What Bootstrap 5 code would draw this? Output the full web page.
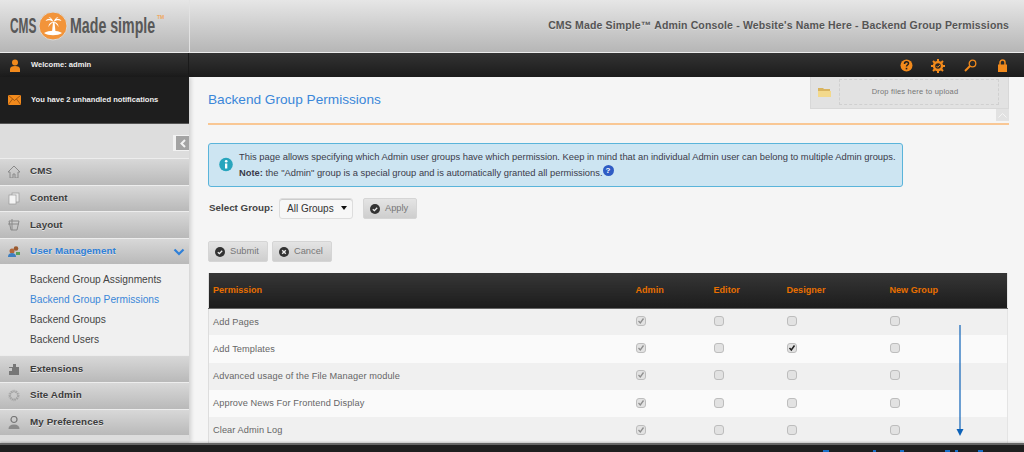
<!DOCTYPE html>
<html lang="en">
<head>
  <meta charset="UTF-8">
  <title>Backend Group Permissions</title>
  <link href="https://cdn.jsdelivr.net/npm/bootstrap@5.3.2/dist/css/bootstrap.min.css" rel="stylesheet">
  <style>
    html, body { height: 100%; }
    body { font-family: Arial, "Liberation Sans", sans-serif; font-size: 10px; background: #f5f5f5; color: #444; overflow: hidden; }
    .page-wrap { height: 452px; overflow: hidden; }
    .top-head { height: 53px; background: linear-gradient(#e6e6e6, #b6b6b6); border-bottom: 1px solid #eee; }
    .logo-box { width: 190px; border-right: 1px solid #e2e2e2; padding-left: 10px; gap: 2px; }
    .logo-word { display: inline-block; font-weight: 700; font-size: 22px; color: #585858; line-height: 1; white-space: nowrap; transform-origin: left center; flex: none; }
    .logo-cms { width: 26px; transform: scaleX(.54); }
    .logo-made { width: 85px; transform: scaleX(.645); }
    .logo-tm { font-size: 5px; line-height: 6px; color: #f0a860; align-self: flex-start; margin-top: 14px; font-weight: 700; }
    .head-title { font-size: 10.5px; font-weight: 700; color: #555; letter-spacing: .15px; padding-right: 15px; text-shadow: 0 1px 0 #ddd; }
    .dark-bar { height: 24px; background: linear-gradient(#333, #1c1c1c); color: #eee; }
    .welcome-box { width: 189px; border-right: 1px solid #1a1a1a; padding-left: 9px; gap: 10px; font-size: 7.6px; font-weight: 700; }
    .tool-icons { padding-right: 6px; }
    .tool-slot { width: 32px; text-align: center; }
    .body-row { height: 366px; }
    .side-col { width: 189px; background: #ddd; box-shadow: 2px 0 4px rgba(0,0,0,.15); z-index: 2; position: relative; }
    .notify-box { height: 47px; background: #1e1e1e; color: #eee; padding-left: 8px; gap: 10px; font-size: 7.6px; font-weight: 700; border-bottom: 1px solid #555; }
    .collapse-row { height: 34px; padding-top: 11px; }
    .collapse-tab { width: 16px; height: 16px; background: #f2f2f2; display: flex; align-items: center; justify-content: flex-end; }
    .collapse-tab span { width: 13px; height: 14px; background: #a3a3a3; display: flex; align-items: center; justify-content: center; }
    .nav-head { height: 26.6px; background: linear-gradient(#d8d8d8, #b9b9b9); border-top: 1px solid #ededed; padding-left: 8px; font-size: 9.8px; font-weight: 700; color: #3c3c3c; letter-spacing: .1px; text-shadow: 0 1px 0 #e5e5e5; }
    .nav-head svg { width: 12px; height: 13px; margin-right: 10px; flex: none; }
    .nav-on { color: #2f80d8; }
    .sub-menu { background: #f0f0f0; height: 91px; padding: 6px 0 0 30px; }
    .sub-menu div { height: 20px; line-height: 20px; font-size: 10.2px; color: #444; }
    .sub-menu .sub-on { color: #3a87d8; }
    .main-col { position: relative; padding: 0 15px 0 19px; min-width: 0; }
    .page-title { height: 48px; margin: 0; padding-top: 14px; font-size: 13.65px; line-height: 17px; font-weight: 400; color: #3b87d9; border-bottom: 2px solid #f9c794; }
    .drop-panel { position: absolute; top: 0; right: 15px; width: 199px; height: 32px; background: #e2e2e2; border: 1px solid #d8d8d8; border-top: 0; z-index: 1; padding: 2px 9px 3px 7px; gap: 8px; }
    .drop-zone { border: 1px dashed #d0d0d0; font-size: 7.5px; color: #777; letter-spacing: .2px; padding-right: 8px; }
    .drop-tab { position: absolute; top: 32px; right: 15px; width: 13px; height: 12px; background: #e2e2e2; display: flex; align-items: center; justify-content: center; }
    .note-box { margin-top: 18px; height: 44px; width: 695px; background: #cde5f2; border: 1px solid #5ab4da; border-radius: 3px; padding-left: 9px; gap: 5px; font-size: 9.37px; line-height: 15px; color: #3b3b4a; white-space: nowrap; }
    .help-dot { display: inline-block; width: 11px; height: 11px; border-radius: 50%; background: #2f5cc4; color: #fff; font-size: 8px; line-height: 11px; font-weight: 700; text-align: center; vertical-align: 3px; }
    .group-row { margin-top: 9px; height: 24px; gap: 10px; }
    .group-label { font-size: 9.8px; font-weight: 700; color: #444; width: 61px; margin-right: -1px; margin-left: 1px; white-space: nowrap; }
    .group-pick { width: 74px; height: 21px; border: 1px solid #ddd; border-radius: 3px; background: #f7f7f7; padding-left: 7px; padding-right: 5px; font-size: 10px; color: #333; box-shadow: inset 0 1px 0 #ccc; }
    .pick-arrow { width: 0; height: 0; border: 3px solid transparent; border-top: 4px solid #111; border-bottom: 0; }
    .act-btn { height: 21px; background: linear-gradient(#e4e4e4, #cecece); border: 1px solid #d5d5d5; border-radius: 2px; font-size: 9.3px; color: #777; padding: 0 8px 0 6px; gap: 5px; }
    .act-btn svg { width: 10px; height: 10px; }
    .group-row .act-btn { margin-top: 1px; }
    .btn-row { margin-top: 21px; gap: 4px; }
    .perm-table { margin-top: 11px; width: 800px; border-right: 1px solid #e4e4e4; border-left: 1px solid #ddd; table-layout: fixed; border-collapse: collapse; }
    .perm-table th { height: 35px; padding: 2px 0 0 4px; background: linear-gradient(#363636, #1c1c1c); border-bottom: 1px solid #666; color: #e86f00; font-size: 9.1px; font-weight: 700; white-space: nowrap; }
    .perm-table td { height: 27.3px; padding: 0 0 0 4px; color: #666; font-size: 9.2px; letter-spacing: .1px; }
    .perm-table td.perm-name { padding-top: 1px; }
    .perm-table tr.alt-a td { background: #f0f0f0; }
    .perm-table tr.alt-b td { background: #fafafa; }
    .tick-box { display: block; width: 10px; height: 10px; margin-top: -2px; border-radius: 3px; background: #e2e2e2; border: 1px solid #bdbdbd; }
    .tick-box svg { display: block; width: 8px; height: 8px; }
    .down-arrow { position: absolute; left: 765px; top: 248px; width: 12px; height: 112px; z-index: 1; }
    .foot-bar { height: 9px; background: #1f1f1f; border-top: 2px solid #666; box-shadow: 0 -1px 2px rgba(0,0,0,.2); position: relative; z-index: 3; overflow: hidden; }
    .foot-mark { position: absolute; bottom: 0; height: 2px; background: #1c70c8; }
  </style>
</head>
<body>
<div class="page-wrap d-flex flex-column">
  <div class="top-head d-flex">
    <div class="logo-box d-flex align-items-center">
      <span class="logo-word logo-cms">CMS</span>
      <svg width="30" height="30" viewBox="0 0 30 30" class="flex-shrink-0" aria-hidden="true">
        <circle cx="15" cy="15" r="14" fill="#f2943a" stroke="#d9d9d9"/>
        <path d="M6 22c5-3 13-3 18 0-4 3-14 3-18 0z" fill="#fff"/>
        <path d="M14 21l1-10h1.500l1 10z" fill="#fff"/>
        <path d="M15.500 11c-2-4-6-4-8-1 3-1 5-1 8 1zM15.500 11c2-4 6-4 8-1-3-1-5-1-8 1zM15.500 11c-1-3-3-5-5-5 2 1 3 3 5 5zM15.500 11c1-3 3-5 5-5-2 1-3 3-5 5zM15.500 11c-3 0-5 2-5 5 1-2 3-4 5-5zM15.500 11c3 0 5 2 5 5-1-2-3-4-5-5z" fill="#fff"/>
      </svg>
      <span class="logo-word logo-made">Made simple</span>
      <span class="logo-tm">TM</span>
    </div>
    <div class="flex-grow-1 d-flex align-items-center justify-content-end head-title">CMS Made Simple™ Admin Console - Website's Name Here - Backend Group Permissions</div>
  </div>

  <div class="dark-bar d-flex">
    <div class="welcome-box d-flex align-items-center">
      <svg width="12" height="13" viewBox="0 0 12 13" aria-hidden="true"><circle cx="6" cy="3.500" r="3" fill="#f28a1c"/><path d="M1 13v-3c0-2 2-3 5-3s5 1 5 3v3z" fill="#f28a1c"/></svg>
      <span>Welcome: admin</span>
    </div>
    <div class="flex-grow-1 d-flex align-items-center justify-content-end tool-icons">
      <span class="tool-slot"><svg width="13" height="13" viewBox="0 0 13 13" aria-hidden="true"><circle cx="6.500" cy="6.500" r="6" fill="#f28a1c"/><path d="M4.500 5c0-3 4-3 4-.5 0 1.500-2 1.500-2 3" fill="none" stroke="#1f1f1f" stroke-width="1.500"/><rect x="5.700" y="8.800" width="1.600" height="1.600" fill="#1f1f1f"/></svg></span>
      <span class="tool-slot"><svg width="14" height="14" viewBox="0 0 14 14" aria-hidden="true"><circle cx="7" cy="7" r="4" fill="none" stroke="#f28a1c" stroke-width="2.400"/><path d="M7 0v3M7 11v3M0 7h3M11 7h3M2 2l2 2M10 10l2 2M12 2l-2 2M4 10l-2 2" stroke="#f28a1c" stroke-width="2"/><path d="M5.500 7l1.200 1.200L9 6" fill="none" stroke="#f28a1c"/></svg></span>
      <span class="tool-slot"><svg width="13" height="13" viewBox="0 0 13 13" aria-hidden="true"><circle cx="8.500" cy="4.500" r="3.300" fill="none" stroke="#f28a1c" stroke-width="1.300"/><path d="M6 7l-5 5" stroke="#f28a1c" stroke-width="2"/></svg></span>
      <span class="tool-slot"><svg width="11" height="13" viewBox="0 0 11 13" aria-hidden="true"><path d="M3 6V3.500a2.500 2.500 0 015 0V6" fill="none" stroke="#f28a1c" stroke-width="1.500"/><rect x="1" y="5.500" width="9" height="7.500" fill="#f28a1c"/></svg></span>
    </div>
  </div>

  <div class="body-row d-flex">
    <div class="side-col flex-shrink-0">
      <div class="notify-box d-flex align-items-center">
        <svg width="13" height="10" viewBox="0 0 13 10" aria-hidden="true"><rect width="13" height="10" fill="#f28a1c"/><path d="M0 0l6.500 5.500L13 0M0 10l4.500-6M13 10L8.500 4" fill="none" stroke="#8a4a10" stroke-width=".8"/></svg>
        <span>You have 2 unhandled notifications</span>
      </div>
      <div class="collapse-row d-flex justify-content-end">
        <div class="collapse-tab"><span><svg width="6" height="9" viewBox="0 0 6 9" aria-hidden="true"><path d="M5 1L1.500 4.500 5 8" fill="none" stroke="#f2f2f2" stroke-width="2"/></svg></span></div>
      </div>
      <div class="nav-head d-flex align-items-center"><svg viewBox="0 0 12 13" aria-hidden="true"><path d="M6 1L0 7h2v6h3V9h2v4h3V7h2z" fill="none" stroke="#8a8a8a"/></svg>CMS</div>
      <div class="nav-head d-flex align-items-center"><svg viewBox="0 0 12 13" aria-hidden="true"><rect x="4" y="1" width="7" height="9" fill="#e8e8e8" stroke="#999" stroke-width=".7"/><rect x="1" y="3" width="7" height="9" fill="#f4f4f4" stroke="#999" stroke-width=".7"/></svg>Content</div>
      <div class="nav-head d-flex align-items-center"><svg viewBox="0 0 12 13" aria-hidden="true"><path d="M1 3h10l-2 9H3zM4 1v11M0 6h11" fill="none" stroke="#8a8a8a"/></svg>Layout</div>
      <div class="nav-head nav-on d-flex align-items-center"><svg viewBox="0 0 12 13" aria-hidden="true"><circle cx="4" cy="6" r="2.500" fill="#b5683a"/><circle cx="8" cy="3.500" r="2.300" fill="#9a5a30"/><path d="M0 12c0-3 2-4 4-4s4 1 4 4z" fill="#3f7fc0"/><path d="M8 7h4v3H8z" fill="#5aa05a"/></svg>User Management<svg class="ms-auto me-1" viewBox="0 0 12 13" aria-hidden="true"><path d="M1.500 4.500L6 9l4.500-4.500" fill="none" stroke="#2f80d8" stroke-width="2.200"/></svg></div>
      <div class="sub-menu">
        <div>Backend Group Assignments</div>
        <div class="sub-on">Backend Group Permissions</div>
        <div>Backend Groups</div>
        <div>Backend Users</div>
      </div>
      <div class="nav-head d-flex align-items-center"><svg viewBox="0 0 12 13" aria-hidden="true"><path d="M5 1h3v3h3v8H1V8h3V5H1V4h4z" fill="#777"/></svg>Extensions</div>
      <div class="nav-head d-flex align-items-center"><svg viewBox="0 0 12 13" aria-hidden="true"><circle cx="6" cy="6.500" r="4" fill="none" stroke="#a0a0a0" stroke-width="2" stroke-dasharray="1.500 .7"/><circle cx="6" cy="6.500" r="5.300" fill="none" stroke="#a8a8a8" stroke-width=".8" stroke-dasharray="1 1"/></svg>Site Admin</div>
      <div class="nav-head d-flex align-items-center"><svg viewBox="0 0 12 13" aria-hidden="true"><circle cx="6" cy="3.500" r="3" fill="none" stroke="#777" stroke-width="1.200"/><path d="M.5 13c0-3 2-4.500 5.500-4.500s5.500 1.500 5.500 4.500z" fill="#8a8a8a"/></svg>My Preferences</div>
    </div>

    <div class="main-col flex-grow-1">
      <h1 class="page-title">Backend Group Permissions</h1>
      <div class="drop-panel d-flex align-items-center">
        <svg width="13" height="10" viewBox="0 0 13 10" class="flex-shrink-0" aria-hidden="true"><path d="M0 1h5l1 1h6v8H0z" fill="#d9b45f"/><path d="M0 4h13v6H0z" fill="#f3d98c"/></svg>
        <div class="drop-zone flex-grow-1 h-100 d-flex align-items-center justify-content-center">Drop files here to upload</div>
      </div>
      <div class="drop-tab"><svg width="9" height="5" viewBox="0 0 9 5" aria-hidden="true"><path d="M.5 4.500l4-4 4 4" fill="none" stroke="#f5f5f5"/></svg></div>

      <div class="note-box d-flex align-items-center">
        <svg width="16" height="16" viewBox="0 0 16 16" class="flex-shrink-0" aria-hidden="true"><circle cx="8" cy="7.500" r="6.800" fill="#28a5bd"/><rect x="7" y="6.500" width="2.300" height="5" fill="#fff"/><circle cx="8.200" cy="4.300" r="1.300" fill="#fff"/></svg>
        <div>This page allows specifying which Admin user groups have which permission. Keep in mind that an individual Admin user can belong to multiple Admin groups.<br><b>Note:</b> the "Admin" group is a special group and is automatically granted all permissions.<span class="help-dot">?</span></div>
      </div>

      <div class="group-row d-flex align-items-center">
        <span class="group-label">Select Group:</span>
        <div class="group-pick d-flex align-items-center justify-content-between"><span>All Groups</span><span class="pick-arrow"></span></div>
        <div class="act-btn d-flex align-items-center"><svg viewBox="0 0 10 10" aria-hidden="true"><circle cx="5" cy="5" r="5" fill="#333"/><path d="M2.800 5.200l1.600 1.500 2.800-3" fill="none" stroke="#eee" stroke-width="1.300"/></svg>Apply</div>
      </div>

      <div class="btn-row d-flex">
        <div class="act-btn d-flex align-items-center"><svg viewBox="0 0 10 10" aria-hidden="true"><circle cx="5" cy="5" r="5" fill="#333"/><path d="M2.800 5.200l1.600 1.500 2.800-3" fill="none" stroke="#eee" stroke-width="1.300"/></svg>Submit</div>
        <div class="act-btn d-flex align-items-center"><svg viewBox="0 0 10 10" aria-hidden="true"><circle cx="5" cy="5" r="5" fill="#333"/><path d="M3.200 3.200l3.600 3.600M6.800 3.200l-3.600 3.600" stroke="#eee" stroke-width="1.400"/></svg>Cancel</div>
      </div>

      <table class="perm-table" id="permTable">
        <colgroup><col style="width:423px"><col style="width:78px"><col style="width:73px"><col style="width:103px"><col></colgroup>
        <thead><tr><th>Permission</th><th>Admin</th><th>Editor</th><th>Designer</th><th>New Group</th></tr></thead>
        <tbody></tbody>
      </table>
      <svg class="down-arrow" viewBox="0 0 12 112" aria-hidden="true"><path d="M6 0v106" stroke="#0d62b8" stroke-width="1.200"/><path d="M2.500 104h7L6 111z" fill="#0d62b8"/></svg>
    </div>
  </div>

  <div class="foot-bar" id="footBar"></div>
</div>
<script>
  // permission rows: name, then which group boxes are ticked
  const rows = [
    ['Add Pages', false],
    ['Add Templates', true],
    ['Advanced usage of the File Manager module', false],
    ['Approve News For Frontend Display', false],
    ['Clear Admin Log', false]
  ];
  const grey = '<svg viewBox="0 0 8 8"><path d="M1.500 4l1.800 2L6.500 1.500" fill="none" stroke="#8f8f8f" stroke-width="1.300"/></svg>';
  const dark = '<svg viewBox="0 0 8 8"><path d="M1.500 4l1.800 2L6.500 1.500" fill="none" stroke="#222" stroke-width="1.500"/></svg>';
  const tbody = document.querySelector('#permTable tbody');
  rows.forEach(function (r, i) {
    const tr = document.createElement('tr');
    tr.className = i % 2 ? 'alt-b' : 'alt-a';
    tr.innerHTML = '<td class="perm-name">' + r[0] + '</td>' +
      '<td><span class="tick-box">' + grey + '</span></td>' +
      '<td><span class="tick-box"></span></td>' +
      '<td><span class="tick-box">' + (r[1] ? dark : '') + '</span></td>' +
      '<td><span class="tick-box"></span></td>';
    tbody.appendChild(tr);
  });

  // tops of the footer links, the rest falls below the window
  const footBar = document.getElementById('footBar');
  [[823, 6], [873, 3], [900, 4], [945, 5], [955, 3], [978, 5]].forEach(function (m) {
    const s = document.createElement('span');
    s.className = 'foot-mark';
    s.style.left = m[0] + 'px';
    s.style.width = m[1] + 'px';
    footBar.appendChild(s);
  });
</script>
<script src="https://cdn.jsdelivr.net/npm/bootstrap@5.3.2/dist/js/bootstrap.bundle.min.js"></script>
</body>
</html>
